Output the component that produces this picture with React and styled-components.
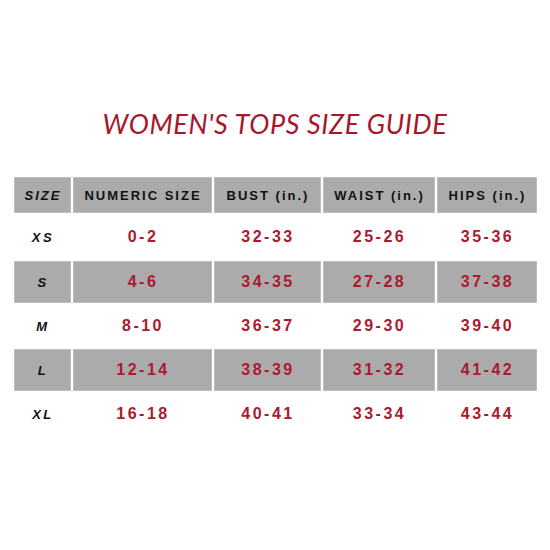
import React from "react";
import styled, { createGlobalStyle } from "styled-components";

const GlobalStyle = createGlobalStyle`
  html, body {
    margin: 0;
    padding: 0;
    background: #fff;
  }
  body {
    font-family: "Liberation Sans", Arial, sans-serif;
  }
`;

const headers = ["SIZE", "NUMERIC SIZE", "BUST (in.)", "WAIST (in.)", "HIPS (in.)"];

const rows = [
  ["XS", "0-2", "32-33", "25-26", "35-36"],
  ["S", "4-6", "34-35", "27-28", "37-38"],
  ["M", "8-10", "36-37", "29-30", "39-40"],
  ["L", "12-14", "38-39", "31-32", "41-42"],
  ["XL", "16-18", "40-41", "33-34", "43-44"],
];

const App = () => {
  return (
    <Page>
      <GlobalStyle />
      <Title>WOMEN'S TOPS SIZE GUIDE</Title>
      <Table>
        {headers.map((h, i) => (
          <Cell key={h} $shaded>
            <HeadText $italic={i === 0}>{h}</HeadText>
          </Cell>
        ))}
        {rows.map((row, r) =>
          row.map((val, c) => (
            <Cell key={r + "-" + c} $shaded={r % 2 === 1}>
              {c === 0 ? <SizeText>{val}</SizeText> : <Value>{val}</Value>}
            </Cell>
          ))
        )}
      </Table>
    </Page>
  );
};

export default App;

const Page = styled.div`
  width: 550px;
  height: 550px;
  display: flex;
  flex-direction: column;
  align-items: center;
  box-sizing: border-box;
  padding-top: 107px;
`;

const Title = styled.h1`
  margin: 0 0 37px 0;
  font-family: "Lato", "Open Sans", sans-serif;
  font-style: italic;
  font-weight: 400;
  font-size: 27px;
  line-height: 33px;
  letter-spacing: 0.6px;
  color: #a8162b;
`;

const Table = styled.div`
  display: grid;
  grid-template-columns: 57px 139px 107px 112px 100px;
  grid-template-rows: 36px 44px 42px 42px 42px 42px;
  gap: 2px;
`;

const Cell = styled.div`
  box-sizing: border-box;
  display: flex;
  align-items: center;
  justify-content: center;
  background: ${(p) => (p.$shaded ? "#ababab" : "#fff")};
  border: 1px solid ${(p) => (p.$shaded ? "#bebebe" : "#fff")};
`;

const HeadText = styled.span`
  font-weight: 700;
  font-size: 13px;
  letter-spacing: 2px;
  font-style: ${(p) => (p.$italic ? "italic" : "normal")};
  color: #111;
  padding-left: 2px;
`;

const SizeText = styled.span`
  font-weight: 700;
  font-style: italic;
  font-size: 13px;
  letter-spacing: 2.5px;
  color: #111;
  padding-left: 2px;
`;

const Value = styled.span`
  font-weight: 700;
  font-size: 16px;
  letter-spacing: 2.5px;
  color: #ab1a2f;
  padding-left: 2px;
`;
